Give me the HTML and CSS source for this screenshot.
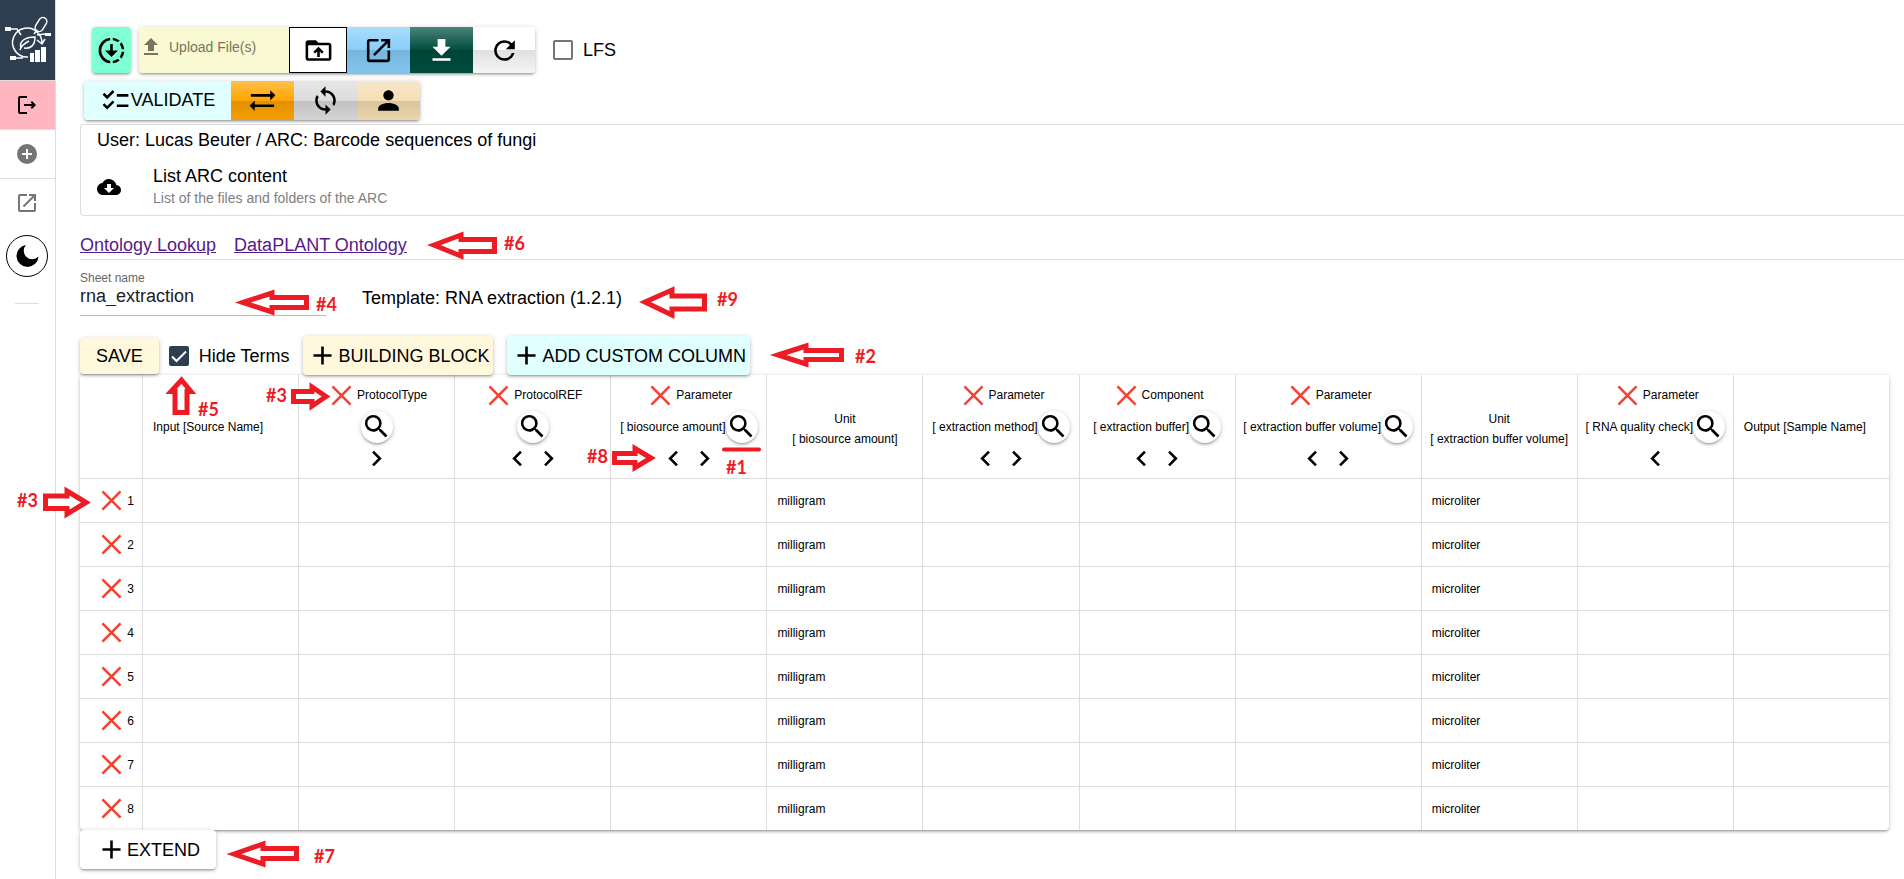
FILE: index.html
```html
<!DOCTYPE html>
<html lang="en">
<head>
<meta charset="utf-8">
<title>ARC – rna_extraction</title>
<link rel="stylesheet" href="styles.css">
</head>
<body>
<svg class="sprite" aria-hidden="true">
  <symbol id="close" viewBox="0 0 24 24"><path d="M5 5l14 14M19 5L5 19" stroke="currentColor" stroke-width="2" fill="none"/></symbol>
  <symbol id="search" viewBox="0 0 24 24"><path d="M15.500 14h-.79l-.28-.27A6.471 6.471 0 0 0 16 9.500 6.500 6.500 0 1 0 9.500 16c1.610 0 3.090-.59 4.230-1.570l.27.28v.79l5 4.990L20.490 19l-4.990-5zm-6 0C7.010 14 5 11.990 5 9.500S7.010 5 9.500 5 14 7.010 14 9.500 11.990 14 9.500 14z"/></symbol>
  <symbol id="next" viewBox="0 0 24 24"><path d="M8.590 16.590L10 18l6-6-6-6-1.410 1.410L13.170 12z"/></symbol>
  <symbol id="prev" viewBox="0 0 24 24"><path d="M15.410 16.590L14 18l-6-6 6-6 1.410 1.410L10.830 12z"/></symbol>
  <symbol id="plus" viewBox="0 0 24 24"><path d="M19 13h-6v6h-2v-6H5v-2h6V5h2v6h6v2z"/></symbol>
  <symbol id="open" viewBox="0 0 24 24"><path d="M19 19H5V5h7V3H5a2 2 0 0 0-2 2v14a2 2 0 0 0 2 2h14c1.100 0 2-.9 2-2v-7h-2v7zM14 3v2h3.590l-9.830 9.830 1.410 1.410L19 6.410V10h2V3h-7z"/></symbol>
</svg>

<nav class="sidebar" aria-label="Main">
  <a class="logo" href="#" aria-label="Home">
    <svg viewBox="0 0 46 48" fill="none" stroke="#fff" stroke-width="1.5">
      <path d="M33 17A14.500 14.500 0 1 0 23 41M33 17a14.500 14.500 0 0 1 4 10M32 24l5 4 3-5"/>
      <rect x="32" y="1" width="8" height="15" rx="4" transform="rotate(32 36 8.500)"/>
      <path d="M32 14l-3 4M5 13h7l4 6M40 18l-8 1M10 42h8"/>
      <path d="M15 34c1-4 5-7 9-9M16 32c-2-6 3-11 14-11 0 8-4 12-11 11"/>
      <path d="M0 11h6v4H0zM40 17h6v3h-6zM5 40h6v4H5z" fill="#fff" stroke="none"/>
      <path d="M25 37h4v9h-4zM30 34h5v12h-5zM36 31h5v15h-5z" fill="#fff" stroke="none"/>
    </svg>
  </a>
  <button class="side-item logout" aria-label="Log out"><svg viewBox="0 0 24 24"><path d="M17 8l-1.410 1.410L17.170 11H9v2h8.170l-1.580 1.580L17 16l4-4-4-4zM5 5h7V3H5a2 2 0 0 0-2 2v14a2 2 0 0 0 2 2h7v-2H5V5z"/></svg></button>
  <button class="side-item muted" aria-label="New ARC"><svg viewBox="0 0 24 24"><path d="M12 2a10 10 0 1 0 0 20 10 10 0 0 0 0-20zm5 11h-4v4h-2v-4H7v-2h4V7h2v4h4v2z"/></svg></button>
  <button class="side-item muted last" aria-label="Open"><svg><use href="#open"/></svg></button>
  <button class="theme" aria-label="Dark mode"><svg viewBox="0 0 24 24"><path d="M11 1a11 11 0 1 0 12.500 11.500A7.500 7.500 0 0 1 11 1z"/></svg></button>
  <hr>
</nav>

<main>
  <div class="bar first">
    <button class="sync-btn" aria-label="Download progress"><svg viewBox="0 0 24 24"><path d="M18.320 4.260A9.900 9.900 0 0 0 13 2.050v2.020c1.460.18 2.790.76 3.900 1.620l1.420-1.430zM19.930 11h2.020a9.900 9.900 0 0 0-2.210-5.320L18.310 7.100A8 8 0 0 1 19.930 11zM18.310 16.900l1.430 1.430A9.900 9.900 0 0 0 21.950 13h-2.020a8 8 0 0 1-1.620 3.900zM13 19.930v2.020a9.900 9.900 0 0 0 5.320-2.210l-1.430-1.430A8 8 0 0 1 13 19.930zM11 19.930v2.020a10 10 0 0 1 0-19.900v2.020a8 8 0 0 0 0 15.860zM17 12l-5 5-5-5h4V7h2v5z"/></svg></button>
    <div class="group">
      <button class="upload"><svg viewBox="0 0 24 24"><path d="M9 16h6v-6h4l-7-7-7 7h4zM5 18h14v2H5z"/></svg>Upload File(s)</button>
      <button class="folder" aria-label="Upload folder"><svg viewBox="0 0 24 24"><path d="M20 6h-8l-2-2H4c-1.100 0-1.990.9-1.990 2L2 18c0 1.100.9 2 2 2h16c1.100 0 2-.9 2-2V8c0-1.100-.9-2-2-2zm0 12H4V8h16v10zM8 13l1.410 1.410L11 12.840V17h2v-4.160l1.590 1.590L16 13l-4-4-4 4z"/></svg></button>
      <button class="glossy sky" aria-label="Open in new window"><svg><use href="#open"/></svg></button>
      <button class="glossy green" aria-label="Download"><svg viewBox="0 0 24 24"><path d="M19 9h-4V3H9v6H5l7 7 7-7zM5 18v2h14v-2H5z"/></svg></button>
      <button class="glossy white" aria-label="Refresh"><svg viewBox="0 0 24 24"><path d="M17.650 6.350A7.958 7.958 0 0 0 12 4c-4.420 0-7.990 3.580-7.990 8s3.570 8 7.990 8c3.730 0 6.840-2.550 7.730-6h-2.080A5.990 5.990 0 0 1 12 18c-3.310 0-6-2.690-6-6s2.690-6 6-6c1.660 0 3.140.69 4.220 1.780L13 11h7V4l-2.350 2.350z"/></svg></button>
    </div>
    <label class="check"><input type="checkbox"> LFS</label>
  </div>

  <div class="bar second">
    <div class="group">
      <button class="validate"><svg viewBox="0 0 24 24"><path d="M22 7h-9v2h9V7zm0 8h-9v2h9v-2zM5.540 11L2 7.460l1.410-1.410 2.120 2.120 4.240-4.240 1.410 1.410L5.540 11zm0 8L2 15.460l1.410-1.410 2.120 2.120 4.240-4.240 1.410 1.410L5.540 19z"/></svg>VALIDATE</button>
      <button class="glossy orange" aria-label="Swap"><svg viewBox="0 0 24 24"><path d="M22 8l-4-4v3H3v2h15v3l4-4zM2 16l4 4v-3h15v-2H6v-3l-4 4z"/></svg></button>
      <button class="glossy grey" aria-label="Sync"><svg viewBox="0 0 24 24"><path d="M12 4V1L8 5l4 4V6c3.310 0 6 2.690 6 6 0 1.010-.25 1.970-.7 2.800l1.460 1.460A7.930 7.930 0 0 0 20 12c0-4.420-3.580-8-8-8zm0 14c-3.310 0-6-2.690-6-6 0-1.010.25-1.970.7-2.800L5.240 7.740A7.930 7.930 0 0 0 4 12c0 4.420 3.580 8 8 8v3l4-4-4-4v3z"/></svg></button>
      <button class="glossy wheat" aria-label="Members"><svg viewBox="0 0 24 24"><path d="M12 12c2.210 0 4-1.790 4-4s-1.790-4-4-4-4 1.790-4 4 1.790 4 4 4zm0 2c-2.670 0-8 1.340-8 4v2h16v-2c0-2.660-5.330-4-8-4z"/></svg></button>
    </div>
  </div>

  <section class="card">
    <div class="card-title">User: Lucas Beuter / ARC: Barcode sequences of fungi</div>
    <div class="card-item">
      <svg viewBox="0 0 24 24"><path d="M19.350 10.040A7.490 7.490 0 0 0 12 4C9.110 4 6.600 5.640 5.350 8.040A5.994 5.994 0 0 0 0 14c0 3.310 2.690 6 6 6h13c2.760 0 5-2.240 5-5 0-2.640-2.050-4.780-4.650-4.960zM17 13l-5 5-5-5h3V9h4v4h3z"/></svg>
      <div>
        <div>List ARC content</div>
        <div class="caption">List of the files and folders of the ARC</div>
      </div>
    </div>
  </section>

  <div class="links"><a href="#lookup">Ontology Lookup</a><a href="#dataplant">DataPLANT Ontology</a></div>

  <div class="sheet">
    <div class="field">
      <label for="sheet">Sheet name</label>
      <input id="sheet" type="text" value="rna_extraction">
    </div>
    <div>Template: RNA extraction (1.2.1)</div>
  </div>

  <div class="actions">
    <button class="raised save">SAVE</button>
    <label class="check"><input type="checkbox" checked> Hide Terms</label>
    <button class="raised block"><svg><use href="#plus"/></svg>BUILDING BLOCK</button>
    <button class="raised custom"><svg><use href="#plus"/></svg>ADD CUSTOM COLUMN</button>
  </div>

  <div class="table-wrap">
  <table>
    <colgroup><col class="num"><col><col><col><col><col><col><col><col class="wide"><col><col><col></colgroup>
    <thead><tr>
      <th></th>
      <th><div class="plain left">Input [Source Name]</div></th>
      <th><div class="head"><button class="x" aria-label="Delete column"><svg><use href="#close"/></svg></button>ProtocolType</div><div class="term"><button class="find" aria-label="Search"><svg><use href="#search"/></svg></button></div><div class="move"><button aria-label="Move right"><svg><use href="#next"/></svg></button></div></th>
      <th><div class="head"><button class="x" aria-label="Delete column"><svg><use href="#close"/></svg></button>ProtocolREF</div><div class="term"><button class="find" aria-label="Search"><svg><use href="#search"/></svg></button></div><div class="move"><button aria-label="Move left"><svg><use href="#prev"/></svg></button><button aria-label="Move right"><svg><use href="#next"/></svg></button></div></th>
      <th><div class="head"><button class="x" aria-label="Delete column"><svg><use href="#close"/></svg></button>Parameter</div><div class="term">[ biosource amount]<button class="find" aria-label="Search"><svg><use href="#search"/></svg></button></div><div class="move"><button aria-label="Move left"><svg><use href="#prev"/></svg></button><button aria-label="Move right"><svg><use href="#next"/></svg></button></div></th>
      <th><div class="unit">Unit<br>[ biosource amount]</div></th>
      <th><div class="head"><button class="x" aria-label="Delete column"><svg><use href="#close"/></svg></button>Parameter</div><div class="term">[ extraction method]<button class="find" aria-label="Search"><svg><use href="#search"/></svg></button></div><div class="move"><button aria-label="Move left"><svg><use href="#prev"/></svg></button><button aria-label="Move right"><svg><use href="#next"/></svg></button></div></th>
      <th><div class="head"><button class="x" aria-label="Delete column"><svg><use href="#close"/></svg></button>Component</div><div class="term">[ extraction buffer]<button class="find" aria-label="Search"><svg><use href="#search"/></svg></button></div><div class="move"><button aria-label="Move left"><svg><use href="#prev"/></svg></button><button aria-label="Move right"><svg><use href="#next"/></svg></button></div></th>
      <th><div class="head"><button class="x" aria-label="Delete column"><svg><use href="#close"/></svg></button>Parameter</div><div class="term">[ extraction buffer volume]<button class="find" aria-label="Search"><svg><use href="#search"/></svg></button></div><div class="move"><button aria-label="Move left"><svg><use href="#prev"/></svg></button><button aria-label="Move right"><svg><use href="#next"/></svg></button></div></th>
      <th><div class="unit">Unit<br>[ extraction buffer volume]</div></th>
      <th><div class="head"><button class="x" aria-label="Delete column"><svg><use href="#close"/></svg></button>Parameter</div><div class="term">[ RNA quality check]<button class="find" aria-label="Search"><svg><use href="#search"/></svg></button></div><div class="move"><button aria-label="Move left"><svg><use href="#prev"/></svg></button></div></th>
      <th><div class="plain left">Output [Sample Name]</div></th>
    </tr></thead>
    <tbody>
      <tr><td><div class="row-id"><button class="x" aria-label="Delete row"><svg><use href="#close"/></svg></button>1</div></td><td></td><td></td><td></td><td></td><td>milligram</td><td></td><td></td><td></td><td>microliter</td><td></td><td></td></tr>
      <tr><td><div class="row-id"><button class="x" aria-label="Delete row"><svg><use href="#close"/></svg></button>2</div></td><td></td><td></td><td></td><td></td><td>milligram</td><td></td><td></td><td></td><td>microliter</td><td></td><td></td></tr>
      <tr><td><div class="row-id"><button class="x" aria-label="Delete row"><svg><use href="#close"/></svg></button>3</div></td><td></td><td></td><td></td><td></td><td>milligram</td><td></td><td></td><td></td><td>microliter</td><td></td><td></td></tr>
      <tr><td><div class="row-id"><button class="x" aria-label="Delete row"><svg><use href="#close"/></svg></button>4</div></td><td></td><td></td><td></td><td></td><td>milligram</td><td></td><td></td><td></td><td>microliter</td><td></td><td></td></tr>
      <tr><td><div class="row-id"><button class="x" aria-label="Delete row"><svg><use href="#close"/></svg></button>5</div></td><td></td><td></td><td></td><td></td><td>milligram</td><td></td><td></td><td></td><td>microliter</td><td></td><td></td></tr>
      <tr><td><div class="row-id"><button class="x" aria-label="Delete row"><svg><use href="#close"/></svg></button>6</div></td><td></td><td></td><td></td><td></td><td>milligram</td><td></td><td></td><td></td><td>microliter</td><td></td><td></td></tr>
      <tr><td><div class="row-id"><button class="x" aria-label="Delete row"><svg><use href="#close"/></svg></button>7</div></td><td></td><td></td><td></td><td></td><td>milligram</td><td></td><td></td><td></td><td>microliter</td><td></td><td></td></tr>
      <tr><td><div class="row-id"><button class="x" aria-label="Delete row"><svg><use href="#close"/></svg></button>8</div></td><td></td><td></td><td></td><td></td><td>milligram</td><td></td><td></td><td></td><td>microliter</td><td></td><td></td></tr>
    </tbody>
  </table>
  </div>
  <button class="raised extend"><svg><use href="#plus"/></svg>EXTEND</button>
</main>

<!-- Numbered callouts pointing at parts of the editor -->
<svg class="callouts" width="900" height="879">
  <g fill="#fff" stroke="#ed1c24" stroke-width="5">
    <path d="M434 245L461 235V239.500H494.500V251.500H461V256Z"/>
    <path d="M243 302.500L272 293V297.500H306.500V307.500H272V312Z"/>
    <path d="M645 302L672 290V296H704.500V309H672V315Z"/>
    <path d="M778 355L806 346V350.500H841.500V359.500H806V364Z"/>
    <path d="M181.500 380L191 391.500H187V412.500H175V391.500H171Z"/>
    <path d="M326 396.500L312 387V391.500H293.500V401.500H312V406Z"/>
    <path d="M651 458L635 448.500V453.500H614.500V462.500H635V467.500Z"/>
    <path d="M86 502.500L67 491V496H45.500V508.500H67V514Z"/>
    <path d="M234 854L263 844V848.500H296.500V858.500H263V864Z"/>
    <path d="M724 449.500H759" stroke-width="4" stroke-linecap="round"/>
  </g>
  <g class="tags">
    <text x="504" y="250">#6</text><text x="316" y="311">#4</text><text x="717" y="306">#9</text>
    <text x="855" y="363">#2</text><text x="198" y="416">#5</text><text x="266" y="402">#3</text>
    <text x="587" y="463">#8</text><text x="726" y="474">#1</text><text x="17" y="507">#3</text>
    <text x="314" y="863">#7</text>
  </g>
</svg>
</body>
</html>
```
FILE: styles.css
```css
* { box-sizing: border-box; }
body {
  margin: 0;
  min-height: 100vh;
  display: grid;
  grid-template-columns: 56px minmax(0, 1fr);
  position: relative;
  overflow: hidden;
  background: #fff;
  color: #000;
  font: 18px/24px "Liberation Sans", Arial, sans-serif;
}
.sprite { position: absolute; width: 0; height: 0; }
svg { fill: currentColor; display: block; flex: none; }
button { font: inherit; color: inherit; border: 0; padding: 0; background: none; }
button svg { width: 31px; height: 31px; }

/* Sidebar */
.sidebar {
  border-right: 1px solid #ddd;
  display: flex;
  flex-direction: column;
  align-items: center;
}
.logo {
  width: 100%;
  height: 80px;
  background: #2c3e50;
  display: flex;
  justify-content: center;
  padding-top: 16px;
}
.logo svg { width: 46px; height: 48px; fill: none; }
.side-item {
  width: 100%;
  height: 49px;
  border-top: 1px solid #ddd;
  display: flex;
  align-items: center;
  justify-content: center;
  padding-right: 1px;
}
.side-item svg { width: 24px; height: 24px; }
.logout { background: #ffb6c1; }
.muted { color: #757575; }
.theme {
  width: 42px;
  height: 42px;
  margin: 8px 1px 0 0;
  border: 1px solid #000;
  border-radius: 50%;
  display: flex;
  align-items: center;
  justify-content: center;
}
.theme svg { width: 24px; height: 24px; }
.sidebar hr { width: 24px; margin: 26px 1px 0 0; border: 0; border-top: 1px solid #ddd; }

/* Toolbars */
main { padding: 27px 0 0 24px; }
.bar { display: flex; align-items: center; }
.first { height: 46px; gap: 8px; padding-left: 12px; }
.second { height: 39px; margin-top: 8px; padding-left: 4px; }
.group {
  display: flex;
  height: 100%;
  border-radius: 4px;
  box-shadow: 0 1px 5px rgba(0,0,0,.2), 0 2px 2px rgba(0,0,0,.14), 0 3px 1px -2px rgba(0,0,0,.12);
}
.group button { display: flex; align-items: center; justify-content: center; }
.group > :first-child { border-radius: 4px 0 0 4px; }
.group > :last-child { border-radius: 0 4px 4px 0; }
.sync-btn, .raised {
  border-radius: 4px;
  box-shadow: 0 1px 5px rgba(0,0,0,.2), 0 2px 2px rgba(0,0,0,.14), 0 3px 1px -2px rgba(0,0,0,.12);
}
.sync-btn { background: #7fffd4; width: 39px; height: 46px; padding: 0 4px; }
.group .upload {
  width: 150px;
  background: #fafad2;
  color: #75755f;
  font-size: 14px;
  justify-content: flex-start;
  align-items: flex-start;
  line-height: 24px;
  padding-top: 8px;
}
.upload svg { width: 24px; height: 24px; margin-right: 6px; }
.group .folder { width: 58px; background: #fff; border: 1px solid #000; }
.glossy {
  width: 63px;
  background-image: linear-gradient(rgba(255,255,255,.3), rgba(255,255,255,0) 50%, rgba(0,0,0,.12) 51%, rgba(0,0,0,.04));
}
.sky { background-color: #87cefa; }
.green { background-color: #004d40; color: #fff; }
.white { background-color: #fff; }
.group .white { width: 62px; }
.orange { background-color: #ffa500; }
.grey { background-color: #dcdcdc; }
.wheat { background-color: #f5deb3; }
.group .validate { width: 147px; padding-bottom: 1px; background: #e0ffff; }
.check { display: flex; align-items: center; gap: 10px; }
.first .check { margin-left: 10px; }
.check input {
  appearance: none;
  width: 20px;
  height: 20px;
  margin: 0;
  border: 2px solid #757575;
  border-radius: 2px;
}
.check input:checked {
  border-color: #2c3e50;
  background: #2c3e50 url("data:image/svg+xml,%3Csvg xmlns='http://www.w3.org/2000/svg' viewBox='0 0 16 16'%3E%3Cpath d='M1 8.500l4.500 4.500L15 3.500' fill='none' stroke='white' stroke-width='2'/%3E%3C/svg%3E") center / 16px no-repeat;
}

/* ARC card */
.card {
  margin-top: 4px;
  height: 92px;
  border: 1px solid #ddd;
  border-right: 0;
  border-radius: 4px 0 0 4px;
  padding: 3px 16px;
}
.card-item { display: flex; align-items: center; gap: 32px; margin-top: 13px; line-height: 22px; }
.card-item svg { width: 24px; height: 24px; }
.caption { font-size: 14px; color: #808080; }

.links {
  height: 44px;
  border-bottom: 1px solid #ddd;
  display: flex;
  align-items: flex-end;
  gap: 18px;
  padding-bottom: 2px;
}
.links a { color: #551a8b; }

.sheet { display: flex; align-items: center; gap: 36px; height: 76px; }
.field { width: 246px; height: 56px; border-bottom: 1px solid #bbb; padding-top: 10px; margin-top: -20px; }
.field label { display: block; font-size: 12px; line-height: 16px; color: #666; }
.field input {
  display: block;
  width: 100%;
  height: 20px;
  border: 0;
  padding: 0;
  font: inherit;
  color: #212121;
  background: none;
  outline: none;
}

.actions { display: flex; align-items: center; height: 39px; }
.actions .check { margin: 0 14px 0 10px; }
.raised { height: 39px; display: flex; align-items: center; }
.actions .save { height: 36px; padding: 0 16px; background: #fff8dc; }
.block { padding: 0 4px; background: #fff8dc; margin-right: 14px; }
.custom { padding: 0 4px; background: #e0ffff; }
.extend { padding: 0 16px; background: #fff; }

/* Sheet table */
.table-wrap {
  margin-right: 15px;
  background: #fff;
  border-radius: 4px;
  box-shadow: 0 1px 5px rgba(0,0,0,.2), 0 2px 2px rgba(0,0,0,.14), 0 3px 1px -2px rgba(0,0,0,.12);
}
table {
  width: 100%;
  table-layout: fixed;
  border-collapse: separate;
  border-spacing: 0;
  font-size: 12px;
  line-height: 20px;
}
.num { width: 62px; }
.wide { width: 186px; }
th, td { font-weight: 400; padding: 0; border-left: 1px solid #ddd; white-space: nowrap; }
th:first-child, td:first-child { border-left: 0; }
th { height: 103px; }
td { height: 44px; padding: 0 10px; border-top: 1px solid #ddd; }
td:first-child { padding: 0 8px 0 0; }
.head, .term, .move { display: flex; align-items: center; justify-content: center; }
.head { height: 31px; }
.term { height: 32px; }
.move { height: 31px; }
.x { color: #f44336; }
.find {
  width: 32px;
  height: 32px;
  border-radius: 50%;
  background: #fff;
  box-shadow: 0 1px 5px rgba(0,0,0,.2), 0 2px 2px rgba(0,0,0,.14), 0 3px 1px -2px rgba(0,0,0,.12);
}
.left { text-align: left; padding-left: 10px; }
.unit { line-height: 20px; padding-top: 5px; }
.row-id { display: flex; align-items: center; justify-content: flex-end; }

.callouts { position: absolute; left: 0; top: 0; pointer-events: none; }
.tags { fill: #ed1c24; font: 700 18px Lato, sans-serif; }
```
